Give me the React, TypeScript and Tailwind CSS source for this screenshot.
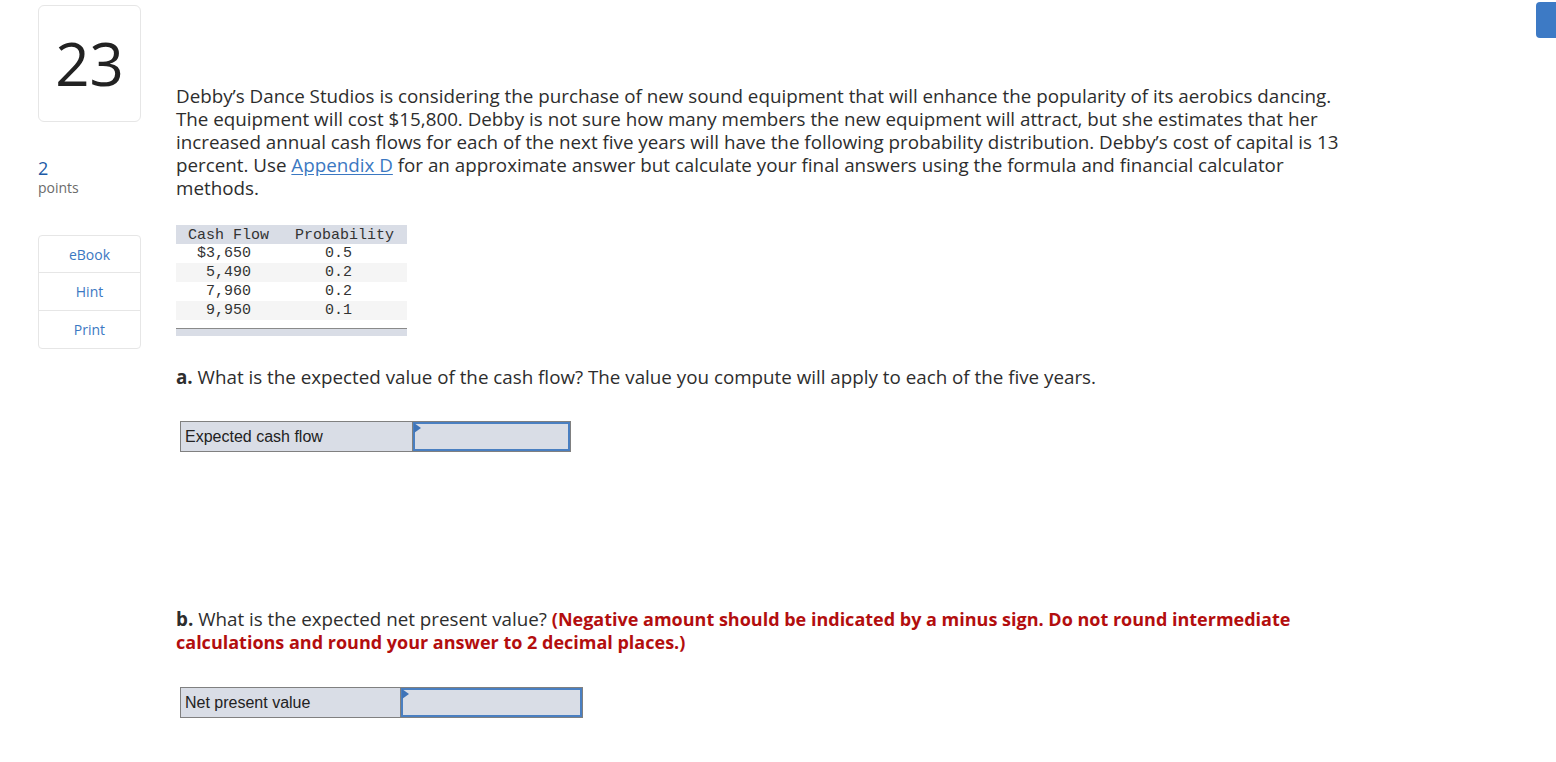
import React from "react";

const prox = { fontFamily: "'Open Sans', Lato, sans-serif" };

function AnswerRow({ label, labelW, inputW }: { label: string; labelW: string; inputW: string }) {
  return (
    <div className="flex border border-[#808080] h-[31px] w-fit bg-[#d9dde6]">
      <div className={`${labelW} border-r border-[#808080] flex items-center pl-[4px] text-[16px] text-[#222] font-['Liberation_Sans',Arial,sans-serif]`}>
        {label}
      </div>
      <div className={`${inputW} relative border-2 border-[#4a7fc1]`}>
        <div className="absolute left-[-1px] top-[-1px] w-0 h-0 border-t-[5px] border-b-[5px] border-l-[7px] border-t-transparent border-b-transparent border-l-[#3f74b8]" />
      </div>
    </div>
  );
}

export default function App() {
  const rows = [
    ["$3,650", "0.5"],
    ["5,490", "0.2"],
    ["7,960", "0.2"],
    ["9,950", "0.1"],
  ];
  return (
    <div className="relative w-[1556px] h-[762px] bg-white overflow-hidden text-[#2d2d2d]" style={prox}>
      <div className="absolute right-0 top-[2px] w-[20px] h-[36px] bg-[#3d7ac5] rounded-l-[4px]" />
      <div className="flex pl-[38px] pt-[5px]">
        {/* left column */}
        <div className="w-[103px] flex flex-col">
          <div className="h-[117px] border border-[#e6e6e6] rounded-[6px] flex items-center justify-center text-[60px] text-[#222] leading-none pb-[2px]">
            23
          </div>
          <div className="mt-[36px] text-[18px] leading-[20px] text-[#1d5aa6]">2</div>
          <div className="text-[14px] leading-[20px] text-[#6b6b6b]">points</div>
          <div className="mt-[37px] border border-[#e6e6e6] rounded-[4px] flex flex-col text-[14px] text-[#3b78c2]">
            <div className="h-[37px] flex items-center justify-center border-b border-[#e6e6e6]">eBook</div>
            <div className="h-[38px] flex items-center justify-center border-b border-[#e6e6e6]">Hint</div>
            <div className="h-[37px] flex items-center justify-center">Print</div>
          </div>
        </div>
        {/* main */}
        <div className="ml-[35px] pt-[80px] text-[18.8px] leading-[23px] text-[#2d2d2d]">
          <p className="whitespace-nowrap">
            Debby’s Dance Studios is considering the purchase of new sound equipment that will enhance the popularity of its aerobics dancing.
            <br />
            The equipment will cost $15,800. Debby is not sure how many members the new equipment will attract, but she estimates that her
            <br />
            increased annual cash flows for each of the next five years will have the following probability distribution. Debby’s cost of capital is 13
            <br />
            percent. Use <span className="text-[#3b78c2] underline underline-offset-2">Appendix D</span> for an approximate answer but calculate your final answers using the formula and financial calculator
            <br />
            methods.
          </p>

          <div className="mt-[25px] w-[231px] font-['Liberation_Mono','DejaVu_Sans_Mono',monospace] text-[15px] leading-[19px] text-[#333]">
            <div className="flex bg-[#d9dde6] pt-[1px] h-[19px]">
              <div className="pl-[12px]">Cash Flow</div>
              <div className="pl-[26px]">Probability</div>
            </div>
            {rows.map((r, i) => (
              <div key={i} className={`flex ${i % 2 === 1 ? "bg-[#f5f5f5]" : "bg-white"}`}>
                <div className="w-[75px] text-right">{r[0]}</div>
                <div className="pl-[74px]">{r[1]}</div>
              </div>
            ))}
            <div className="mt-[8px] h-[8px] bg-[#d9dde6] border-t border-[#8a8a8a]" />
          </div>

          <p className="mt-[30px] whitespace-nowrap">
            <span className="font-bold">a.</span> What is the expected value of the cash flow? The value you compute will apply to each of the five years.
          </p>

          <div className="mt-[32px] ml-[4px]">
            <AnswerRow label="Expected cash flow" labelW="w-[232px]" inputW="w-[157px]" />
          </div>

          <p className="mt-[156px] whitespace-nowrap">
            <span className="font-bold">b.</span> What is the expected net present value?{" "}
            <span className="font-bold text-[18px] text-[#b30e0e]">(Negative amount should be indicated by a minus sign. Do not round intermediate</span>
            <br />
            <span className="font-bold text-[18px] text-[#b30e0e]">calculations and round your answer to 2 decimal places.)</span>
          </p>

          <div className="mt-[33px] ml-[4px]">
            <AnswerRow label="Net present value" labelW="w-[220px]" inputW="w-[181px]" />
          </div>
        </div>
      </div>
    </div>
  );
}
